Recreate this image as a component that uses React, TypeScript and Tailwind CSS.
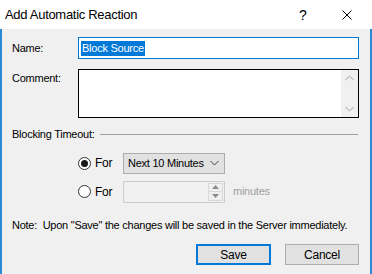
export default function App() {
  return (
    <div
      className="w-[372px] h-[274px] flex flex-col bg-[#f0f0f0] text-[11px] tracking-[-0.25px] text-black overflow-hidden"
      style={{ fontFamily: '"Liberation Sans", Arial, sans-serif' }}
    >
      {/* Title bar */}
      <div className="h-[29px] shrink-0 bg-white flex items-center pl-[5px]">
        <span className="text-[13px] tracking-[-0.3px] text-black leading-none flex-1">Add Automatic Reaction</span>
        <span className="text-[14px] leading-none w-[10px] mr-[33px]">?</span>
        <svg width="10" height="10" viewBox="0 0 10 10" className="mr-[20px]">
          <path d="M0.5 0.5 L9.5 9.5 M9.5 0.5 L0.5 9.5" stroke="#000" strokeWidth="1" />
        </svg>
      </div>

      {/* Body */}
      <div className="flex-1 flex flex-col border-l-2 border-r-2 border-[#2b8ad6] pl-[10px] pr-[11px]">
        {/* Name */}
        <div className="flex items-center mt-[8px]">
          <span className="w-[66px]">Name:</span>
          <div className="w-[281px] h-[22px] bg-white border border-[#0078d7] flex items-center pl-[2px]">
            <span className="bg-[#0078d7] text-white px-[1px] leading-[15px]">Block Source</span>
          </div>
        </div>

        {/* Comment */}
        <div className="flex items-start mt-[10px]">
          <span className="w-[66px] pt-[1px]">Comment:</span>
          <div className="w-[281px] h-[49px] bg-white border border-black flex justify-end">
            <div className="w-[17px] h-full bg-[#f0f0f0] flex flex-col justify-between items-center py-[5px]">
              <svg width="9" height="6" viewBox="0 0 9 6">
                <path d="M0.5 5 L4.5 1 L8.5 5" fill="none" stroke="#c2c2c2" strokeWidth="1.2" />
              </svg>
              <svg width="9" height="6" viewBox="0 0 9 6">
                <path d="M0.5 1 L4.5 5 L8.5 1" fill="none" stroke="#c2c2c2" strokeWidth="1.2" />
              </svg>
            </div>
          </div>
        </div>

        {/* Blocking Timeout */}
        <div className="flex items-center mt-[8px]">
          <span>Blocking Timeout:</span>
          <div className="flex-1 h-px bg-[#a0a0a0] ml-[5px] mr-[1px]" />
        </div>

        {/* For (preset) */}
        <div className="flex items-center mt-[10px] pl-[66px]">
          <div className="w-[13px] h-[13px] rounded-full border border-[#333] bg-white flex items-center justify-center">
            <div className="w-[7px] h-[7px] rounded-full bg-[#1a1a1a]" />
          </div>
          <span className="ml-[4px] w-[28px] text-[12px]">For</span>
          <div className="w-[102px] h-[21px] bg-[#e1e1e1] border border-[#adadad] flex items-center pl-[4px] pr-[5px]">
            <span className="flex-1 whitespace-nowrap">Next 10 Minutes</span>
            <svg width="9" height="6" viewBox="0 0 9 6">
              <path d="M0.5 1 L4.5 5 L8.5 1" fill="none" stroke="#444" strokeWidth="1" />
            </svg>
          </div>
        </div>

        {/* For (custom) */}
        <div className="flex items-center mt-[7px] pl-[66px]">
          <div className="w-[13px] h-[13px] rounded-full border border-[#333] bg-white" />
          <span className="ml-[4px] w-[28px] text-[12px]">For</span>
          <div className="w-[102px] h-[22px] bg-[#f0f0f0] border border-[#cccccc] flex justify-end items-center pr-[1px]">
            <div className="w-[15px] h-[18px] flex flex-col border border-[#d9d9d9]">
              <div className="flex-1 flex items-center justify-center border-b border-[#d9d9d9]">
                <svg width="7" height="4" viewBox="0 0 7 4">
                  <path d="M0 4 L3.5 0 L7 4 Z" fill="#8c8c8c" />
                </svg>
              </div>
              <div className="flex-1 flex items-center justify-center">
                <svg width="7" height="4" viewBox="0 0 7 4">
                  <path d="M0 0 L7 0 L3.5 4 Z" fill="#8c8c8c" />
                </svg>
              </div>
            </div>
          </div>
          <span className="ml-[8px] text-[#a0a0a0]">minutes</span>
        </div>

        {/* Note */}
        <div className="mt-[14px] whitespace-nowrap">Note:&nbsp; Upon "Save" the changes will be saved in the Server immediately.</div>

        {/* Buttons */}
        <div className="flex justify-end gap-[14px] mt-[11px]">
          <button className="w-[75px] h-[21px] bg-[#e1e1e1] border-2 border-[#0078d7] text-[12px]">Save</button>
          <button className="w-[74px] h-[21px] bg-[#e1e1e1] border border-[#adadad] text-[12px]">Cancel</button>
        </div>
      </div>
    </div>
  );
}
